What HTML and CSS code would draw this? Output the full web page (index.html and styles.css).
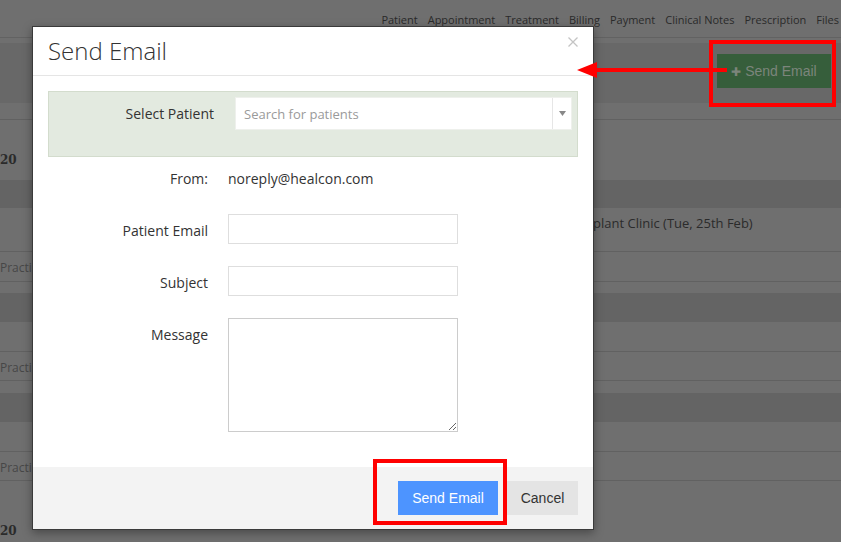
FILE: index.html
```html
<!DOCTYPE html>
<html>
<head>
<meta charset="utf-8">
<link rel="stylesheet" href="styles.css">
</head>
<body>
<div class="page">
  <nav class="topnav">
    <span>Patient</span><span>Appointment</span><span>Treatment</span><span>Billing</span><span>Payment</span><span>Clinical Notes</span><span>Prescription</span><span>Files</span>
  </nav>
  <div class="gap6"></div>
  <div class="panel-head">
    <button class="bg-btn"><span class="plus">✚</span> Send Email</button>
  </div>
  <div class="gap16 line-bottom"></div>
  <div class="date-row"><span class="date">20</span></div>
  <div class="band first"></div>
  <div class="row tall line-bottom"><span class="appt">plant Clinic (Tue, 25th Feb)</span></div>
  <div class="row line-bottom"><span class="prac">Practice</span></div>
  <div class="gap11"></div>
  <div class="band"></div>
  <div class="row line-bottom"></div>
  <div class="row short line-bottom"><span class="prac">Practice</span></div>
  <div class="gap12"></div>
  <div class="band"></div>
  <div class="row line-bottom"></div>
  <div class="row short line-bottom"><span class="prac">Practice</span></div>
  <div class="date-row2"><span class="date">20</span></div>
</div>

<div class="modal">
  <div class="modal-header">
    <h4 class="modal-title">Send Email</h4>
    <svg class="close" width="10" height="10" viewBox="0 0 10 10"><path d="M0.5 0.5 L9.5 9.5 M9.5 0.5 L0.5 9.5" stroke="#c4c4c4" stroke-width="1.3" fill="none"/></svg>
  </div>
  <div class="modal-body">
    <div class="patient-panel">
      <label class="pp-label">Select Patient</label>
      <div class="select">
        <span class="placeholder">Search for patients</span>
        <span class="arrow"><svg width="7" height="5" viewBox="0 0 7 5"><path d="M0 0 H7 L3.5 5 Z" fill="#888"/></svg></span>
      </div>
    </div>
    <div class="frow from-row">
      <span class="flabel">From:</span>
      <span class="fvalue">noreply@healcon.com</span>
    </div>
    <div class="frow first-input">
      <span class="flabel pad">Patient Email</span>
      <input class="finput" type="text">
    </div>
    <div class="frow">
      <span class="flabel pad">Subject</span>
      <input class="finput" type="text">
    </div>
    <div class="frow">
      <span class="flabel pad">Message</span>
      <textarea class="ftext"></textarea>
    </div>
  </div>
  <div class="modal-footer">
    <button class="btn-primary">Send Email</button>
    <button class="btn-cancel">Cancel</button>
  </div>
</div>

<div class="anno anno-footer"></div>
<div class="anno anno-top"></div>
<svg class="anno-arrow" width="150" height="20" viewBox="0 0 150 20">
  <rect x="16" y="8" width="134" height="4" fill="#ff0000"/>
  <path d="M0 10 L20 2 L20 18 Z" fill="#ff0000"/>
</svg>
</body>
</html>
```
FILE: styles.css
```css
* { box-sizing: border-box; }
html, body { margin: 0; padding: 0; }
body {
  width: 841px;
  height: 542px;
  overflow: hidden;
  background: #6f6f6f;
  font-family: "Open Sans", "Liberation Sans", sans-serif;
  position: relative;
}
.page { width: 841px; }
.topnav {
  height: 38px;
  display: flex;
  justify-content: flex-end;
  align-items: center;
  gap: 10px;
  padding: 2px 2px 0 0;
  font-size: 11px;
  letter-spacing: 0;
  color: #2a2a2a;
  border-bottom: 1px solid #626262;
}
.gap6 { height: 5px; }
.gap11 { height: 11px; }
.gap12 { height: 12px; }
.gap16 { height: 17px; }
.line-bottom { border-bottom: 1px solid #616161; }
.panel-head {
  height: 60px;
  background: #686868;
  display: flex;
  justify-content: flex-end;
  align-items: flex-start;
  padding: 11px 10px 0 0;
}
.bg-btn {
  width: 114px;
  height: 34px;
  background: #365e3b;
  border: none;
  color: #7c857c;
  font-family: "Liberation Sans", Arial, sans-serif;
  font-size: 14px;
  padding: 0;
}
.bg-btn .plus { font-size: 12px; }
.date-row { height: 60px; padding: 27px 0 0 0; }
.date-row2 { height: 62px; padding: 37px 0 0 0; }
.date {
  font-family: "DejaVu Serif", "Liberation Serif", serif;
  font-weight: bold;
  font-size: 12px;
  color: #2b2b2b;
  display: inline-block;
}
.band { height: 29px; background: #646464; }
.band.first { height: 28px; }
.row { height: 30px; padding: 7px 0 0 0; font-size: 12px; }
.row.short { height: 29px; }
.row.tall { height: 44px; padding: 6px 0 0 593px; }
.appt { font-size: 13px; color: #2b2b2b; }
.prac { color: #474747; font-size: 12px; }

/* modal */
.modal {
  position: absolute;
  left: 32px;
  top: 26px;
  width: 562px;
  height: 504px;
  background: #fff;
  border: 1px solid #3a3a3a;
  box-shadow: 0 3px 9px rgba(0,0,0,0.35);
  display: flex;
  flex-direction: column;
}
.modal-header {
  height: 49px;
  border-bottom: 1px solid #e5e5e5;
  display: flex;
  justify-content: space-between;
  align-items: flex-start;
  padding: 10px 15px 0 15px;
}
.modal-title {
  margin: 0;
  font-size: 24px;
  font-weight: 300;
  line-height: 28px;
  color: #333;
}
.close { margin-top: 0; }
.modal-body {
  flex: 1;
  padding: 15px 15px 0 15px;
}
.patient-panel {
  height: 66px;
  background: #e3eae0;
  border: 1px solid #d3dccd;
  display: flex;
  align-items: flex-start;
  padding: 5px 5px 0 0;
}
.pp-label {
  width: 165px;
  text-align: right;
  font-size: 14px;
  color: #333;
  line-height: 33px;
}
.select {
  margin-left: 21px;
  flex: 1;
  height: 33px;
  background: #fff;
  border: 1px solid #eef0ec;
  display: flex;
  align-items: center;
}
.placeholder {
  flex: 1;
  padding-left: 8px;
  font-size: 13px;
  color: #9a9a9a;
}
.arrow {
  width: 19px;
  height: 100%;
  border-left: 1px solid #e6e6e6;
  display: flex;
  align-items: center;
  justify-content: center;
}
.frow {
  display: flex;
  align-items: flex-start;
  margin-top: 22px;
}
.from-row { margin-top: 12px; line-height: 20px; }
.frow.first-input { margin-top: 25px; }
.flabel {
  width: 160px;
  text-align: right;
  font-size: 14px;
  color: #333;
  line-height: 20px;
  margin-right: 20px;
}
.flabel.pad { padding-top: 7px; }
.fvalue { font-size: 14px; color: #333; }
.finput {
  width: 230px;
  height: 30px;
  border: 1px solid #dedede;
  margin: 0;
  padding: 0;
  background: #fff;
}
.ftext {
  width: 230px;
  height: 114px;
  border: 1px solid #cccccc;
  margin: 0;
  padding: 0;
  resize: both;
}
.modal-footer {
  height: 62px;
  background: #f3f3f3;
  display: flex;
  justify-content: flex-end;
  align-items: flex-start;
  gap: 9px;
  padding: 14px 15px 0 0;
}
.btn-primary, .btn-cancel {
  height: 34px;
  border: none;
  font-family: "Liberation Sans", Arial, sans-serif;
  font-size: 14px;
  padding: 0;
}
.btn-primary { width: 100px; background: #4d94ff; color: #fff; }
.btn-cancel { width: 71px; background: #e4e4e4; color: #333; }

/* annotations */
.anno {
  position: absolute;
  border: 4px solid #ff0000;
}
.anno-footer { left: 373px; top: 459px; width: 134px; height: 66px; }
.anno-top { left: 709px; top: 40px; width: 127px; height: 67px; }
.anno-arrow { position: absolute; left: 577px; top: 60px; }
```
